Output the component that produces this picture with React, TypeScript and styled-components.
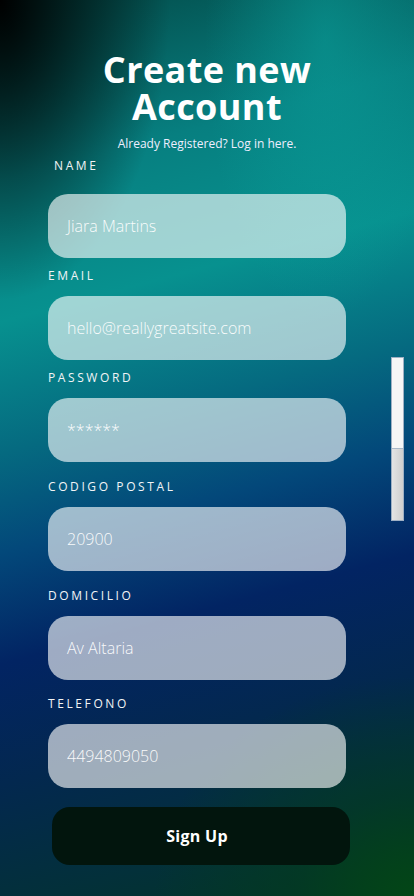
import React from "react";
import styled, { createGlobalStyle } from "styled-components";

const Global = createGlobalStyle`
  html, body { margin: 0; padding: 0; }
  body { width: 414px; height: 896px; overflow: hidden; font-family: "Open Sans", "Liberation Sans", sans-serif; }
  * { box-sizing: border-box; }
`;

const Screen = styled.div`
  position: relative;
  width: 414px;
  height: 896px;
  overflow: hidden;
  background:
    radial-gradient(ellipse 170px 300px at 0px 0px, rgba(0,0,0,1) 0%, rgba(0,0,0,0.7) 30%, rgba(0,0,0,0) 100%),
    radial-gradient(ellipse 120px 280px at 325px 40px, rgba(10,160,155,0.55) 0%, rgba(10,160,155,0) 100%),
    radial-gradient(ellipse 260px 220px at 414px 896px, rgba(3,70,22,1) 0%, rgba(3,60,30,0.6) 45%, rgba(3,60,30,0) 100%),
    linear-gradient(165deg, #034a48 0%, #077f80 18%, #07918f 32%, #056a80 45%, #03487a 55%, #022463 66%, #03284f 78%, #03303a 90%, #033524 100%);
  color: #fff;
`;

const Content = styled.main`
  display: flex;
  flex-direction: column;
  padding: 51px 0 0 48px;
  width: 414px;
`;

const Header = styled.header`
  display: flex;
  flex-direction: column;
  align-items: center;
  width: 318px;
`;

const Title = styled.h1`
  margin: 0;
  font-family: "Open Sans", "Liberation Sans", sans-serif;
  font-weight: 700;
  font-size: 36px;
  line-height: 37px;
  text-align: center;
  letter-spacing: 0.4px;
  color: #fff;
`;

const Subtitle = styled.p`
  margin: 11px 0 0 0;
  font-size: 12px;
  line-height: 16px;
  color: #eef;
  font-weight: 400;
`;

const Field = styled.div<{ $top: number }>`
  display: flex;
  flex-direction: column;
  margin-top: ${(p) => p.$top}px;
  width: 298px;
`;

const Label = styled.label<{ $indent?: number; $gap?: number }>`
  font-size: 12px;
  line-height: 16px;
  letter-spacing: 2.6px;
  color: #f2f4f6;
  padding-left: ${(p) => p.$indent || 0}px;
  margin-bottom: ${(p) => p.$gap ?? 12}px;
`;

const Input = styled.div`
  height: 64px;
  border-radius: 20px;
  background: rgba(255, 255, 255, 0.62);
  display: flex;
  align-items: center;
  padding-left: 19px;
  font-size: 16px;
  font-weight: 300;
  color: rgba(255, 255, 255, 0.95);
`;

const Button = styled.button`
  margin: 19px 0 0 4px;
  width: 298px;
  height: 58px;
  border: none;
  border-radius: 18px;
  background: #02150d;
  color: #fff;
  padding: 0 8px 0 0;
  font-family: "Open Sans", "Liberation Sans", sans-serif;
  font-weight: 700;
  font-size: 16px;
  letter-spacing: 0.3px;
`;

const Scrollbar = styled.div`
  position: absolute;
  left: 391px;
  top: 357px;
  width: 13px;
  height: 164px;
  display: flex;
  flex-direction: column;
  border: 1px solid #9fb0c4;
`;

const ThumbTop = styled.div`
  height: 91px;
  background: #f6f6f6;
  border-bottom: 1px solid #a9b8c8;
`;

const ThumbBottom = styled.div`
  flex: 1;
  background: linear-gradient(90deg, #e4e4e4, #cfcfcf);
`;

const fields = [
  { label: "NAME", value: "Jiara Martins", top: 6, indent: 6, gap: 20 },
  { label: "EMAIL", value: "hello@reallygreatsite.com", top: 10 },
  { label: "PASSWORD", value: "******", top: 10 },
  { label: "CODIGO POSTAL", value: "20900", top: 17 },
  { label: "DOMICILIO", value: "Av Altaria", top: 17 },
  { label: "TELEFONO", value: "4494809050", top: 16 },
];

export default function App() {
  return (
    <>
      <Global />
      <Screen>
        <Content>
          <Header>
            <Title>
              Create new
              <br />
              Account
            </Title>
            <Subtitle>Already Registered? Log in here.</Subtitle>
          </Header>
          {fields.map((f) => (
            <Field key={f.label} $top={f.top}>
              <Label $indent={f.indent} $gap={f.gap}>
                {f.label}
              </Label>
              <Input>{f.value}</Input>
            </Field>
          ))}
          <Button>Sign Up</Button>
        </Content>
        <Scrollbar>
          <ThumbTop />
          <ThumbBottom />
        </Scrollbar>
      </Screen>
    </>
  );
}
